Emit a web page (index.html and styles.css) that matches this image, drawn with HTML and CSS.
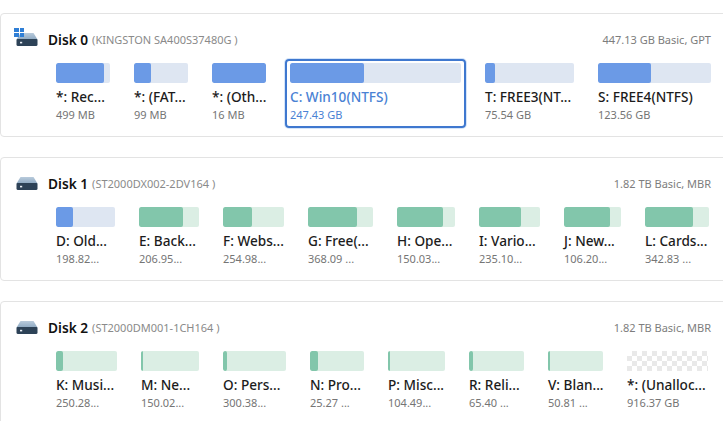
FILE: index.html
```html
<!DOCTYPE html>
<html lang="en">
<head>
<meta charset="utf-8">
<title>Disks</title>
<link rel="stylesheet" href="styles.css">
</head>
<body>
<svg class="sprite" width="0" height="0" aria-hidden="true">
  <defs>
    <linearGradient id="top" x1="0" y1="0" x2="0" y2="1"><stop offset="0" stop-color="#b9cbdc"/><stop offset="1" stop-color="#8ea9c2"/></linearGradient>
  </defs>
  <symbol id="hdd" viewBox="0 0 22 13">
    <path d="M4.5 0H17.5L21.5 6.5H0.5Z" fill="url(#top)"/>
    <path d="M0.5 7Q0.5 6 1.5 6H20.5Q21.5 6 21.5 7V11.5Q21.5 13 20 13H2Q0.5 13 0.5 11.5Z" fill="#2d4257"/>
    <rect x="4" y="8.8" width="2.2" height="1.6" fill="#e8eef4"/>
  </symbol>
</svg>
<main class="list">
  <section class="disk">
    <header class="head">
      <svg class="icon" width="22" height="13"><use href="#hdd"/></svg>
      <span class="win"><i></i><i></i><i></i><i></i></span>
      <b class="disk-name">Disk 0</b><span class="model">(KINGSTON SA400S37480G )</span>
      <span class="meta">447.13 GB Basic, GPT</span>
    </header>
    <div class="parts">
      <div class="part" style="width:54px"><div class="bar blue"><div class="fill" style="width:89%"></div></div><div class="name">*: Rec...</div><div class="size">499 MB</div></div>
      <div class="part" style="width:54px"><div class="bar blue"><div class="fill" style="width:32%"></div></div><div class="name">*: (FAT...</div><div class="size">99 MB</div></div>
      <div class="part" style="width:54px"><div class="bar blue"><div class="fill" style="width:100%"></div></div><div class="name">*: (Oth...</div><div class="size">16 MB</div></div>
      <div class="part selected" style="width:171px"><div class="bar blue"><div class="fill" style="width:43%"></div></div><div class="name">C: Win10(NTFS)</div><div class="size">247.43 GB</div></div>
      <div class="part" style="width:89px"><div class="bar blue"><div class="fill" style="width:11%"></div></div><div class="name">T: FREE3(NT...</div><div class="size">75.54 GB</div></div>
      <div class="part" style="width:113px"><div class="bar blue"><div class="fill" style="width:47%"></div></div><div class="name">S: FREE4(NTFS)</div><div class="size">123.56 GB</div></div>
    </div>
  </section>
  <section class="disk">
    <header class="head">
      <svg class="icon" width="22" height="13"><use href="#hdd"/></svg>
      <b class="disk-name">Disk 1</b><span class="model">(ST2000DX002-2DV164 )</span>
      <span class="meta">1.82 TB Basic, MBR</span>
    </header>
    <div class="parts">
      <div class="part" style="width:59px"><div class="bar blue"><div class="fill" style="width:28%"></div></div><div class="name">D: Old...</div><div class="size">198.82...</div></div>
      <div class="part" style="width:60px"><div class="bar green"><div class="fill" style="width:74%"></div></div><div class="name">E: Back...</div><div class="size">206.95...</div></div>
      <div class="part" style="width:61px"><div class="bar green"><div class="fill" style="width:48%"></div></div><div class="name">F: Webs...</div><div class="size">254.98...</div></div>
      <div class="part" style="width:65px"><div class="bar green"><div class="fill" style="width:76%"></div></div><div class="name">G: Free(...</div><div class="size">368.09 ...</div></div>
      <div class="part" style="width:58px"><div class="bar green"><div class="fill" style="width:79%"></div></div><div class="name">H: Ope...</div><div class="size">150.03...</div></div>
      <div class="part" style="width:61px"><div class="bar green"><div class="fill" style="width:69%"></div></div><div class="name">I: Vario...</div><div class="size">235.10...</div></div>
      <div class="part" style="width:57px"><div class="bar green"><div class="fill" style="width:80%"></div></div><div class="name">J: New...</div><div class="size">106.20...</div></div>
      <div class="part" style="width:64px"><div class="bar green"><div class="fill" style="width:75%"></div></div><div class="name">L: Cards...</div><div class="size">342.83 ...</div></div>
    </div>
  </section>
  <section class="disk">
    <header class="head">
      <svg class="icon" width="22" height="13"><use href="#hdd"/></svg>
      <b class="disk-name">Disk 2</b><span class="model">(ST2000DM001-1CH164 )</span>
      <span class="meta">1.82 TB Basic, MBR</span>
    </header>
    <div class="parts">
      <div class="part" style="width:61px"><div class="bar green"><div class="fill" style="width:11%"></div></div><div class="name">K: Musi...</div><div class="size">250.28...</div></div>
      <div class="part" style="width:58px"><div class="bar green"><div class="fill" style="width:3.5%"></div></div><div class="name">M: Ne...</div><div class="size">150.02...</div></div>
      <div class="part" style="width:63px"><div class="bar green"><div class="fill" style="width:6.5%"></div></div><div class="name">O: Pers...</div><div class="size">300.38...</div></div>
      <div class="part" style="width:54px"><div class="bar green"><div class="fill" style="width:15%"></div></div><div class="name">N: Pro...</div><div class="size">25.27 ...</div></div>
      <div class="part" style="width:57px"><div class="bar green"><div class="fill" style="width:3.5%"></div></div><div class="name">P: Misc...</div><div class="size">104.49...</div></div>
      <div class="part" style="width:55px"><div class="bar green"><div class="fill" style="width:7%"></div></div><div class="name">R: Reli...</div><div class="size">65.40 ...</div></div>
      <div class="part" style="width:55px"><div class="bar green"><div class="fill" style="width:3.5%"></div></div><div class="name">V: Blan...</div><div class="size">50.81 ...</div></div>
      <div class="part" style="width:81px"><div class="bar checker"></div><div class="name">*: (Unalloc...</div><div class="size">916.37 GB</div></div>
    </div>
  </section>
</main>
</body>
</html>
```
FILE: styles.css
```css
* { box-sizing: border-box; }
html, body { margin: 0; height: 100%; overflow: hidden; background: #fff; }
body { font-family: "Noto Sans", "Open Sans", sans-serif; color: #1c1c1c; }
.sprite { position: absolute; }
.list { display: flex; flex-direction: column; gap: 20px; width: 740px; padding-top: 13px; }
.disk { height: 124px; border: 1px solid #e3e3e3; border-radius: 4px; padding: 14px 28px 0 15px; flex: none; }
.head { display: flex; align-items: center; height: 22px; position: relative; }
.icon { flex: none; margin-right: 10px; }
.win { position: absolute; left: -2px; top: 0; display: grid; grid-template-columns: 4.5px 4.5px; gap: 1px; }
.win i { height: 4px; background: #2f7fd6; display: block; }
.disk-name { font-size: 13.7px; font-weight: 600; color: #111; margin-right: 4px; }
.model { font-size: 11px; color: #8a8a8a; }
.meta { margin-left: auto; font-size: 11px; color: #7d7d7d; }
.parts { display: flex; gap: 24px; margin-top: 13px; padding-left: 40px; }
.part { flex: none; }
.bar { height: 20px; border-radius: 2px; overflow: hidden; }
.fill { height: 100%; border-radius: 2px; }
.blue { background: #dee6f2; }
.blue .fill { background: #6b9ae6; }
.green { background: #dbeee4; }
.green .fill { background: #82c6ab; }
.checker { background-color: #fff; background-image: conic-gradient(#e9e9e9 25%, #fff 0 50%, #e9e9e9 0 75%, #fff 0); background-size: 10px 10px; border-radius: 0; }
.name { margin-top: 5px; font-size: 13.6px; font-weight: 500; line-height: 18px; white-space: nowrap; color: #1c1c1c; }
.size { font-size: 11px; line-height: 16px; margin-top: 1px; color: #757575; white-space: nowrap; }
.selected { margin: -4px -5px; padding: 2px 3px; border: 2px solid #3f78cf; border-radius: 4px; box-shadow: 0 0 0 1px #d5e5f9; box-sizing: content-box; height: 61px; }
.selected .name, .selected .size { color: #4a82d4; }
```
